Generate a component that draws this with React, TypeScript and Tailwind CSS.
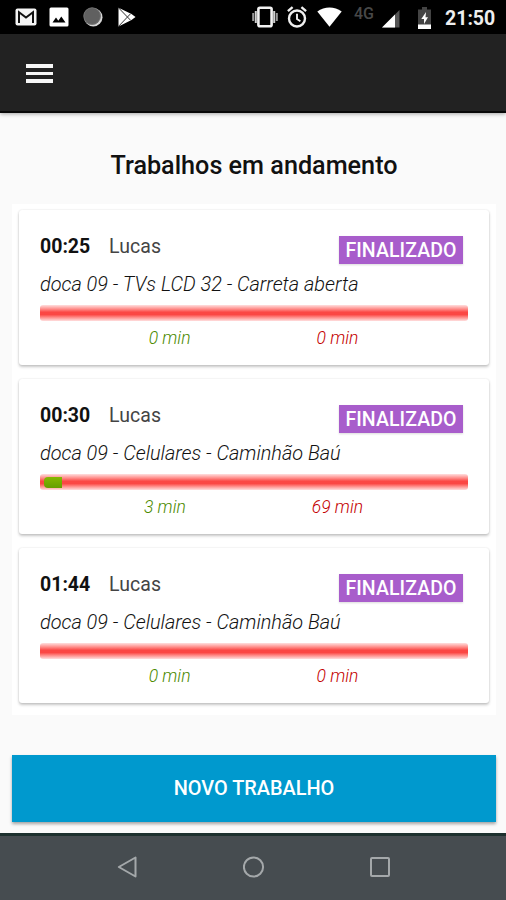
type Job = {
  time: string;
  name: string;
  description: string;
  elapsed: string;
  late: string;
  progress: number;
};

const jobs: Job[] = [
  {
    time: "00:25",
    name: "Lucas",
    description: "doca 09 - TVs LCD 32 - Carreta aberta",
    elapsed: "0 min",
    late: "0 min",
    progress: 0,
  },
  {
    time: "00:30",
    name: "Lucas",
    description: "doca 09 - Celulares - Caminhão Baú",
    elapsed: "3 min",
    late: "69 min",
    progress: 4.2,
  },
  {
    time: "01:44",
    name: "Lucas",
    description: "doca 09 - Celulares - Caminhão Baú",
    elapsed: "0 min",
    late: "0 min",
    progress: 0,
  },
];

function StatusBar() {
  return (
    <div className="flex h-[34px] shrink-0 items-center bg-black pl-[15px] pr-[10px]">
      {/* Gmail */}
      <svg className="h-[18px] w-[22px]" viewBox="0 0 22 18">
        <rect x="0.5" y="0.5" width="21" height="17" rx="2" fill="#f5f5f5" />
        <path d="M4 15V4.2l7 5.3 7-5.3V15" fill="none" stroke="#111" strokeWidth="2" />
      </svg>
      {/* Gallery */}
      <svg className="ml-[12px] h-[20px] w-[20px]" viewBox="0 0 20 20">
        <rect x="0.5" y="0.5" width="19" height="19" rx="1.5" fill="#fff" />
        <path d="M3.5 15.5L7 10.5l2.3 3.2 3-4.2 4.2 6z" fill="#000" />
      </svg>
      <svg className="ml-[14px] h-[20px] w-[20px]" viewBox="0 0 20 20">
        <circle cx="10.3" cy="10.2" r="9.2" fill="#d6d6d6" />
        <circle cx="9.1" cy="9.1" r="8.6" fill="#606060" />
        <circle cx="9.1" cy="9.1" r="8.3" fill="none" stroke="#757575" strokeWidth="0.8" />
      </svg>
      {/* Play */}
      <svg className="ml-[14px] h-[20px] w-[20px]" viewBox="0 0 20 20">
        <path d="M1.5.8L14.5 7 18.5 10l-4 3-13 6.4z" fill="#fff" />
        <path d="M1.5.8L13.5 13.2M1.5 19.4L13.5 6.8" stroke="#333" strokeWidth="1" />
      </svg>

      <div className="flex-1" />

      {/* Vibration */}
      <svg className="h-[22px] w-[26px]" viewBox="0 0 26 22">
        <rect x="6.4" y="1.7" width="13.2" height="18.6" rx="1.5" fill="none" stroke="#f2f2f2" strokeWidth="2.6" />
        <path d="M3.8 5v12M22.2 5v12" stroke="#d0d0d0" strokeWidth="2" />
        <path d="M1.2 7v8M24.8 7v8" stroke="#999" strokeWidth="2" />
      </svg>
      {/* Alarm */}
      <svg className="ml-[9px] h-[22px] w-[20px]" viewBox="0 0 20 22">
        <circle cx="10" cy="12.5" r="8" fill="none" stroke="#f0f0f0" strokeWidth="2.4" />
        <path d="M10 7.8v5.2l3.4 2.2" fill="none" stroke="#f0f0f0" strokeWidth="1.9" />
        <path d="M.9 5.1L5.6 1.2M19.1 5.1l-4.7-3.9" stroke="#f0f0f0" strokeWidth="2.4" />
      </svg>
      {/* Wifi */}
      <svg className="ml-[10px] h-[20px] w-[25px]" viewBox="0 0 25 20">
        <path d="M.3 4.5C7.5-.7 17.5-.7 24.7 4.5L12.5 19.7z" fill="#fff" />
      </svg>
      <span className="ml-[12px] w-[22px] pb-[7px] text-[16px] font-medium leading-none text-[#484848]">4G</span>
      {/* Signal */}
      <svg className="ml-[6px] mt-[3px] h-[18px] w-[18px]" viewBox="0 0 18 18">
        <path d="M17.5 0V17.5H0z" fill="#555" />
        <path d="M13 4.5V17.5H0z" fill="#fff" />
      </svg>
      {/* Battery */}
      <svg className="ml-[18px] mt-px h-[22px] w-[13px]" viewBox="0 0 13 22">
        <path d="M4 0h5v2.5h4V22H0V2.5h4z" fill="#444" />
        <path d="M0 17.5h13V22H0z" fill="#fff" />
        <path d="M8 5L3.3 12h2.7v5L10 10.3H7.5z" fill="#fff" />
      </svg>
      <span className="ml-[14px] mt-[3px] w-[51px] whitespace-nowrap text-[19.5px] font-bold leading-none text-[#eee]">
        21:50
      </span>
    </div>
  );
}

function Toolbar() {
  return (
    <div className="relative z-10 flex h-[79px] shrink-0 items-center border-b-2 border-[#080808] bg-[#222] pl-[26px] pt-[2px] shadow-[0_1px_4px_rgba(0,0,0,0.35)]">
      <div className="flex flex-col gap-[4px]">
        <div className="h-[3.5px] w-[27px] bg-[#f7f7f7]" />
        <div className="h-[3.5px] w-[27px] bg-[#f7f7f7]" />
        <div className="h-[3.5px] w-[27px] bg-[#f7f7f7]" />
      </div>
    </div>
  );
}

function JobCard({ job }: { job: Job }) {
  return (
    <div className="h-[155px] rounded-[3px] bg-white px-[21px] pt-[25px] shadow-[0_2px_3px_rgba(0,0,0,0.22),0_0_2px_rgba(0,0,0,0.12)]">
      <div className="flex h-[34px] items-start">
        <span className="w-[69px] text-[19.5px] font-bold leading-[24px] text-[#111]">{job.time}</span>
        <span className="text-[19.5px] leading-[24px] tracking-[0.1px] text-[#444]">{job.name}</span>
        <span className="ml-auto mr-[5px] mt-px flex h-[28px] w-[124px] items-center justify-center bg-[#a85dcb] pt-px text-[19.5px] font-medium leading-none tracking-[0.1px] text-white shadow-[0_1px_2px_rgba(0,0,0,0.15)]">
          FINALIZADO
        </span>
      </div>
      <div className="mt-[4px] whitespace-nowrap text-[19.9px] font-light italic leading-[24px] text-[#111]">
        {job.description}
      </div>
      <div className="mt-[8px] h-[16px] w-[428px] overflow-hidden rounded-[3px] bg-[linear-gradient(180deg,#ffdfdf_0%,#ff8d8a_25%,#fb4744_45%,#fb4744_60%,#ff8d8a_78%,#ffdfdf_100%)]">
        {job.progress > 0 && (
          <div
            className="ml-[4px] mt-[3px] h-[11px] rounded-l-[4px] bg-[linear-gradient(180deg,#85b800,#669f00)]"
            style={{ width: `${job.progress}%` }}
          />
        )}
      </div>
      <div className="mt-[6px] flex w-[427px] justify-center gap-[126px] text-[17.5px] font-light italic leading-[22px]">
        <span className="text-[#4c8a00]">{job.elapsed}</span>
        <span className="text-[#c40000]">{job.late}</span>
      </div>
    </div>
  );
}

function NavBar() {
  return (
    <div className="flex h-[67px] shrink-0 items-center justify-between border-t-[3px] border-[#1d302e] bg-[#464c50] px-[116px] pb-[2px]">
      <svg className="h-[22px] w-[21px]" viewBox="0 0 21 22">
        <path d="M19.5 1.5v19L2.8 11z" fill="none" stroke="#a4a8aa" strokeWidth="2" strokeLinejoin="round" />
      </svg>
      <svg className="h-[22px] w-[22px]" viewBox="0 0 22 22">
        <circle cx="10.5" cy="11" r="9.6" fill="none" stroke="#a4a8aa" strokeWidth="2" />
      </svg>
      <svg className="h-[20px] w-[20px]" viewBox="0 0 20 20">
        <rect x="1" y="1" width="18" height="18" rx="1" fill="none" stroke="#a4a8aa" strokeWidth="2" />
      </svg>
    </div>
  );
}

export default function App() {
  return (
    <div className="flex h-[900px] w-[506px] flex-col overflow-hidden bg-[#fafafa] font-[Roboto,sans-serif]">
      <StatusBar />
      <Toolbar />
      <main className="flex flex-1 flex-col pl-[12px] pr-[10px]">
        <h1 className="mt-[38px] text-center text-[25.2px] font-medium leading-[30px] text-[#111]">
          Trabalhos em andamento
        </h1>
        <div className="mt-[23px] flex h-[511px] flex-col gap-[14px] bg-white px-[7px] pt-[6px]">
          {jobs.map((job) => (
            <JobCard key={job.time} job={job} />
          ))}
        </div>
        <button className="mt-[40px] h-[67px] w-[484px] bg-[#0099ce] text-[19.9px] font-medium text-white shadow-[0_2px_3px_rgba(0,0,0,0.35)]">
          NOVO TRABALHO
        </button>
      </main>
      <NavBar />
    </div>
  );
}
